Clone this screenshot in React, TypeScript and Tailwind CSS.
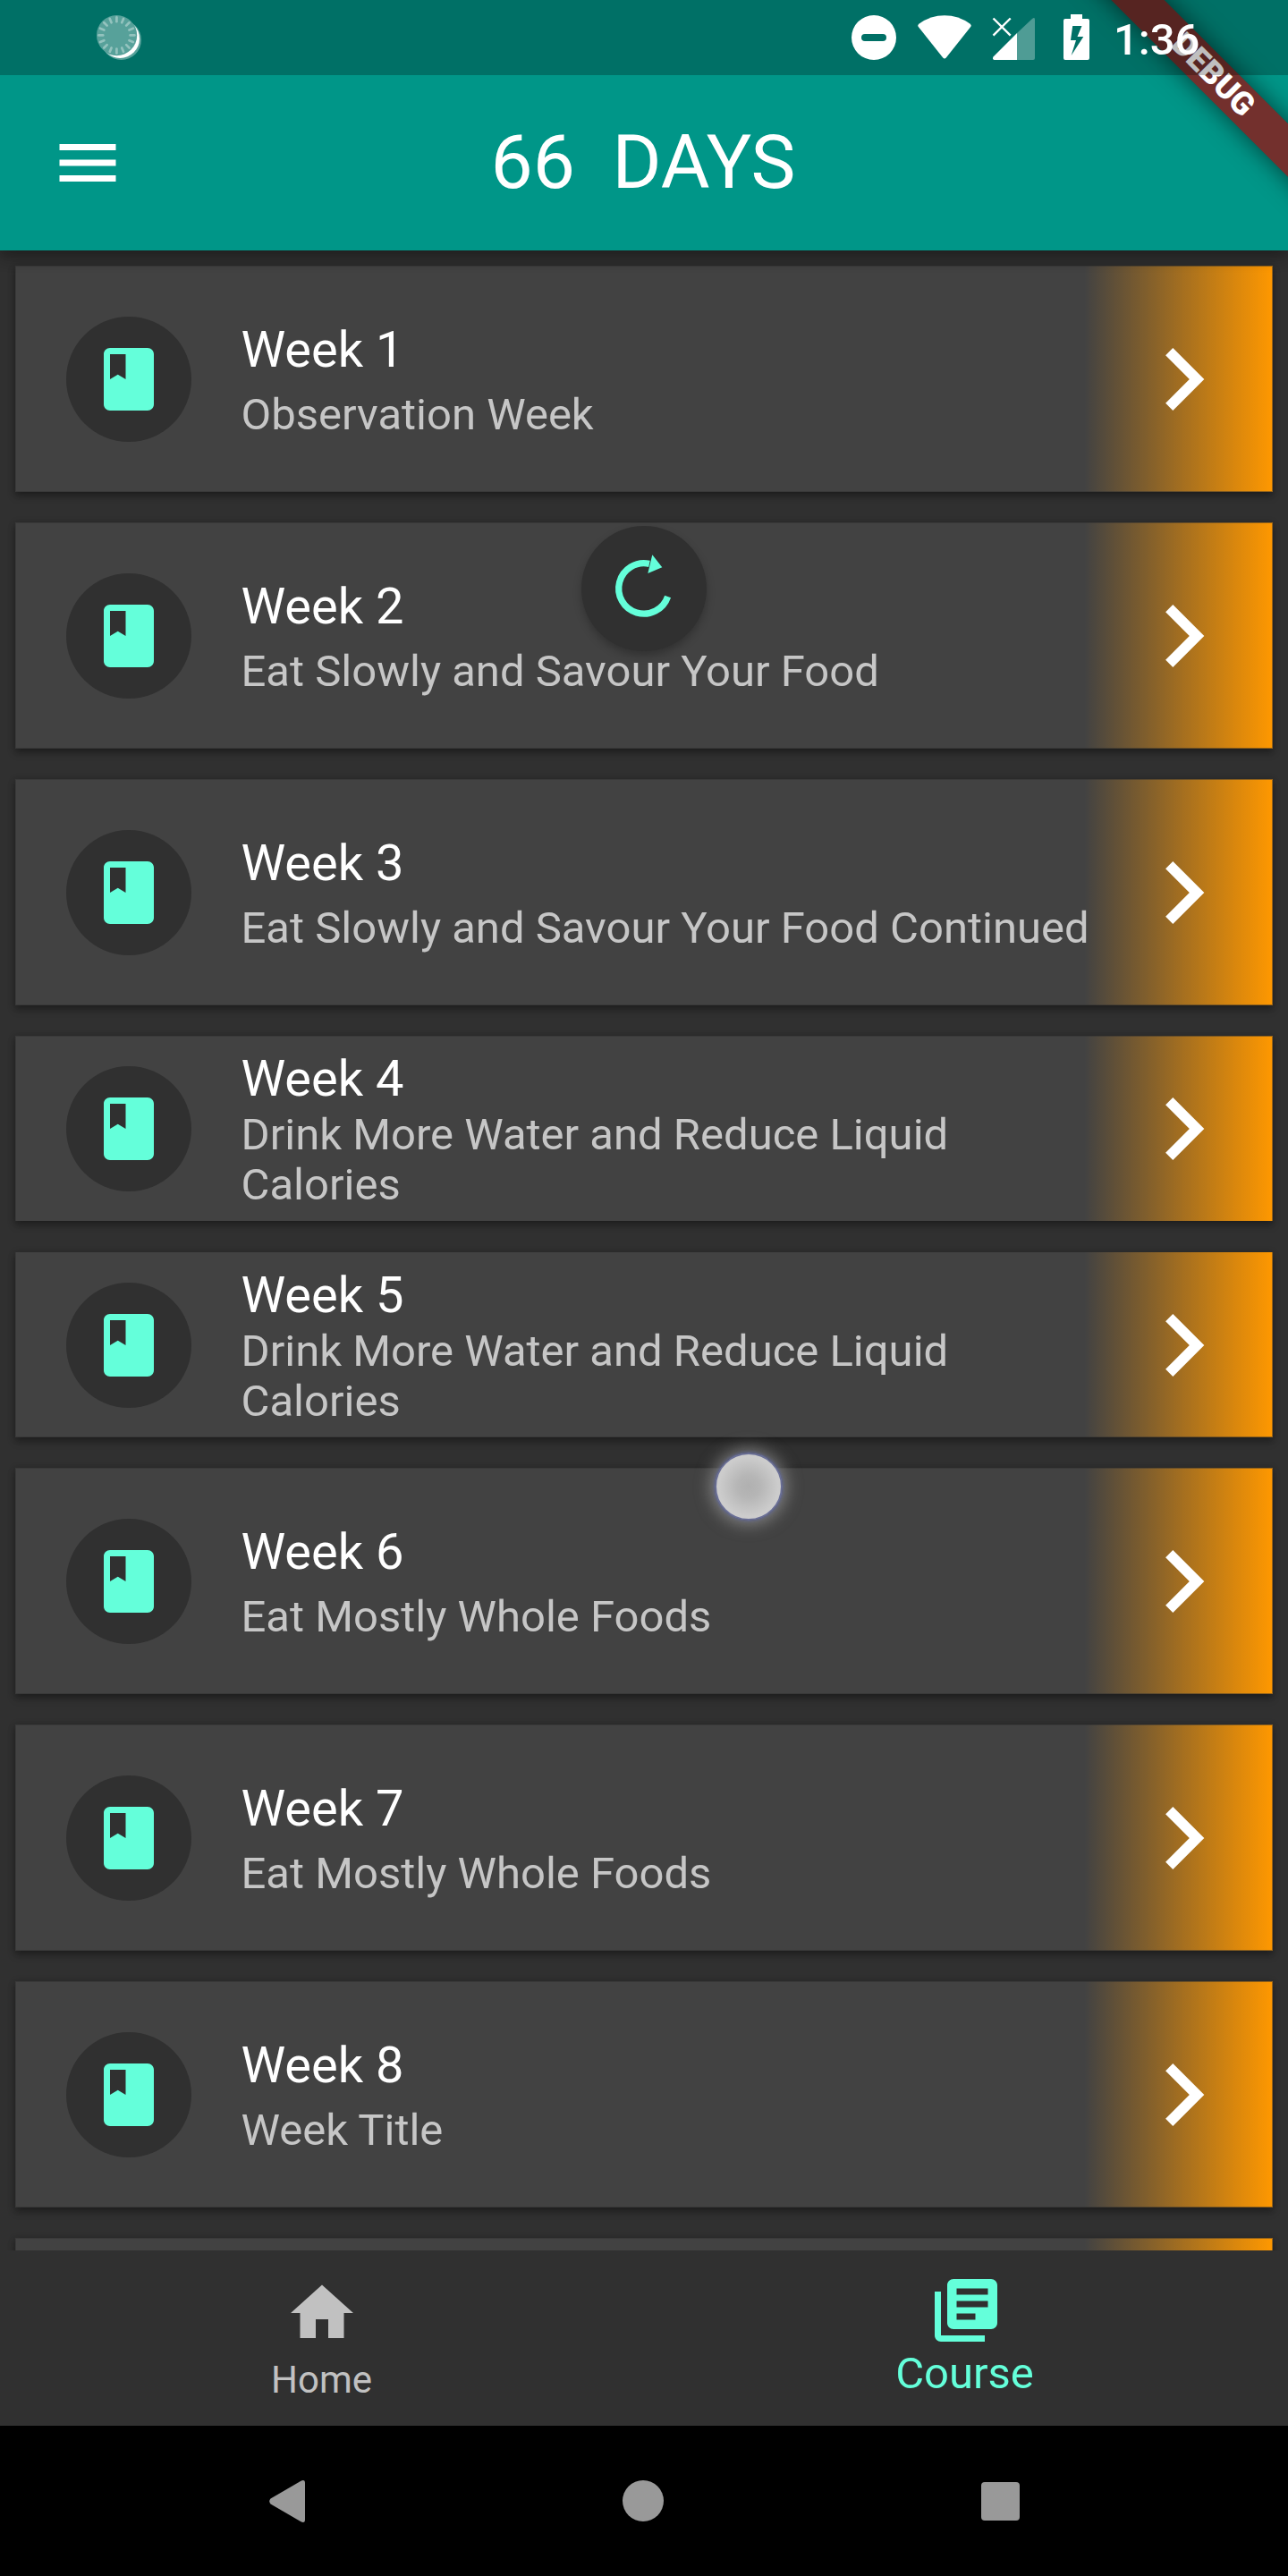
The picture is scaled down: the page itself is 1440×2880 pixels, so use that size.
import type { ReactNode } from "react";

type Week = {
  title: string;
  subtitle: string;
  box: string;
  text: string;
  edge: string;
};

const TALL = "h-[253px] mb-[34px]";
const TALL_TEXT = "pt-[61px] gap-[12px]";
const SHORT_TEXT = "pt-[15px] gap-[2px]";
const FULL_EDGE = "border";

const weeks: Week[] = [
  { title: "Week 1", subtitle: "Observation Week", box: TALL, text: TALL_TEXT, edge: FULL_EDGE },
  { title: "Week 2", subtitle: "Eat Slowly and Savour Your Food", box: TALL, text: TALL_TEXT, edge: FULL_EDGE },
  { title: "Week 3", subtitle: "Eat Slowly and Savour Your Food Continued", box: TALL, text: TALL_TEXT, edge: FULL_EDGE },
  { title: "Week 4", subtitle: "Drink More Water and Reduce Liquid Calories", box: "h-[207px] mb-[35px]", text: SHORT_TEXT, edge: "border-x border-t" },
  { title: "Week 5", subtitle: "Drink More Water and Reduce Liquid Calories", box: "h-[207px] mb-[34px]", text: SHORT_TEXT, edge: "border-x border-b" },
  { title: "Week 6", subtitle: "Eat Mostly Whole Foods", box: TALL, text: TALL_TEXT, edge: FULL_EDGE },
  { title: "Week 7", subtitle: "Eat Mostly Whole Foods", box: TALL, text: TALL_TEXT, edge: FULL_EDGE },
  { title: "Week 8", subtitle: "Week Title", box: TALL, text: TALL_TEXT, edge: FULL_EDGE },
];

function Card({ box, edge, children }: { box: string; edge: string; children?: ReactNode }) {
  return (
    <div
      className={`relative flex shrink-0 items-center bg-[#424242] pl-[56.5px] pr-[30px] shadow-[0_5px_8px_rgba(0,0,0,0.28),0_1px_8px_rgba(0,0,0,0.2)] ${box}`}
    >
      <div className="absolute inset-y-0 right-0 w-[211px] bg-linear-to-r from-transparent to-[#ff9800]" />
      <div className={`absolute inset-0 border-[#303030]/50 ${edge}`} />
      {children}
    </div>
  );
}

function WeekCard({ week }: { week: Week }) {
  return (
    <Card box={week.box} edge={week.edge}>
      <div className="flex size-[140px] shrink-0 items-center justify-center rounded-full bg-[#303030]">
        <svg viewBox="0 0 24 24" className="size-[84px] fill-[#64ffda]">
          <path d="M18 2H6c-1.1 0-2 .9-2 2v16c0 1.1.9 2 2 2h12c1.1 0 2-.9 2-2V4c0-1.1-.9-2-2-2zM6 4h5v8l-2.5-1.5L6 12V4z" />
        </svg>
      </div>
      <div className={`ml-[56px] flex w-[960px] flex-col self-start ${week.text}`}>
        <div className="text-[56px] leading-[66px] text-white">{week.title}</div>
        <div className="text-[49px] leading-[56px] text-[#c6c6c6]">{week.subtitle}</div>
      </div>
      <svg viewBox="0 0 24 24" className="relative ml-auto size-[140px] shrink-0 fill-white">
        <path d="M8.59 16.59L13.17 12 8.59 7.41 10 6l6 6-6 6-1.41-1.41z" />
      </svg>
    </Card>
  );
}

const TICKS = Array.from({ length: 16 }, (_, i) => i * 22.5);

function SyncIcon() {
  return (
    <svg viewBox="0 0 50 50" className="size-[50px]">
      <g opacity=".34" fill="#fff">
        <circle cx="22.4" cy="22.4" r="22.4" />
        <circle cx="27.6" cy="27.6" r="22.4" />
      </g>
      <mask id="crescent">
        <rect width="50" height="50" fill="#fff" />
        <circle cx="22.4" cy="22.4" r="22.8" fill="#000" />
      </mask>
      <circle cx="26.2" cy="26.2" r="21.8" fill="#fff" mask="url(#crescent)" />
      <g stroke="#fff" strokeOpacity=".36" strokeWidth="2.7" strokeLinecap="round">
        {TICKS.map((a) => (
          <line key={a} x1="37.6" y1="22.4" x2="42.4" y2="22.4" transform={`rotate(${a} 22.4 22.4)`} />
        ))}
      </g>
    </svg>
  );
}

function StatusBar() {
  return (
    <div className="absolute inset-x-0 top-0 flex h-[84px] items-center bg-black/25 pl-[108px] pr-[98px]">
      <SyncIcon />
      <svg viewBox="0 0 270 50" className="ml-auto h-[50px] w-[270px] overflow-visible" fill="#fff">
        <path fillRule="evenodd" d="M25 0a25 25 0 1 0 0 50a25 25 0 1 0 0-50zM15 21H35a4 4 0 0 1 0 8H15a4 4 0 0 1 0-8z" />
        <path d="M74.6 12.8Q73.5 11 75.3 9.7Q88.5 0.3 104 0.3Q119.5 0.3 132.7 9.7Q134.5 11 133.4 12.8L105.8 47.5Q104 49.5 102.2 47.5z" />
        <path d="M185 20V50H203Q205 50 205 48V5Q205 1.5 202 4z" fillOpacity=".31" />
        <path d="M185 20V50H159.5Q157 49 158.5 46.5z" />
        <path d="M158.5 3.5L177.7 22.7M177.7 3.5L158.5 22.7" stroke="#fff" strokeWidth="2.4" />
        <path fillRule="evenodd" d="M245-1h13v5h6q2 0 2 2v42q0 2-2 2h-25q-2 0-2-2V6q0-2 2-2h6zM247.2 12L245 28H251L245.7 45L259.3 24H252.5L257.5 12z" />
      </svg>
      <div className="ml-[23px] mt-[4px] w-[97px] whitespace-nowrap text-[49px] font-medium leading-[57px] text-white">1:36</div>
    </div>
  );
}

function DebugBanner() {
  return (
    <div className="absolute right-0 top-0 size-[280px] overflow-hidden">
      <div className="absolute left-[-84px] top-[63px] flex h-[42px] w-[560px] rotate-45 items-center justify-center bg-[rgba(144,22,22,0.8)] shadow-[0_0_26px_2px_rgba(0,0,0,0.5)]">
        <span className="text-[35.7px] font-black leading-none text-white">DEBUG</span>
      </div>
    </div>
  );
}

export default function App() {
  return (
    <div className="relative flex h-[2880px] w-[1440px] flex-col overflow-hidden bg-[#303030] font-['Roboto',sans-serif]">
      <header className="relative z-10 h-[280px] shrink-0 bg-[#009688] pt-[84px] shadow-[0_7px_16px_rgba(0,0,0,0.28),0_2px_20px_rgba(0,0,0,0.16)]">
        <div className="relative flex h-[196px] items-center justify-center">
          <svg viewBox="0 0 24 24" className="absolute left-[56px] size-[84px] fill-white">
            <path d="M3 18h18v-2H3v2zm0-5h18v-2H3v2zm0-7v2h18V6H3z" />
          </svg>
          <h1 className="mr-[2px] whitespace-pre text-[84px] leading-[98px] text-white">66  DAYS</h1>
        </div>
        <DebugBanner />
        <StatusBar />
      </header>

      <main className="flex h-[2236px] shrink-0 flex-col overflow-hidden px-[17px] pt-[17px]">
        {weeks.map((w) => (
          <WeekCard key={w.title} week={w} />
        ))}
        <Card box="h-[253px]" edge={FULL_EDGE} />
      </main>

      <nav className="relative grid h-[196px] shrink-0 grid-cols-2 bg-[#303030]">
        <div className="flex flex-col items-center pt-[28px] text-[#c1c1c1]">
          <svg viewBox="0 0 24 24" className="size-[84px] fill-current">
            <path d="M10 20v-6h4v6h5v-8h3L12 3 2 12h3v8z" />
          </svg>
          <span className="mr-[1px] mt-[8px] text-[42px] leading-[49px]">Home</span>
        </div>
        <div className="flex flex-col items-center pt-[25px] text-[#64ffda]">
          <svg viewBox="0 0 24 24" className="size-[84px] fill-current">
            <path d="M4 6H2v14c0 1.1.9 2 2 2h14v-2H4V6zm16-4H8c-1.1 0-2 .9-2 2v12c0 1.1.9 2 2 2h12c1.1 0 2-.9 2-2V4c0-1.1-.9-2-2-2zm-1 9H9V9h10v2zm-4 4H9v-2h6v2zm4-8H9V5h10v2z" />
          </svg>
          <span className="mr-[3px] text-[49px] leading-[57px]">Course</span>
        </div>
      </nav>

      <footer className="flex h-[168px] shrink-0 items-center justify-between bg-black pl-[301px] pr-[300.5px]">
        <svg viewBox="0 0 40 47" className="h-[47px] w-[40px] fill-[#999]">
          <path d="M1.5 20.5L35 1Q40-1.5 40 3V44Q40 48.5 35 46L1.5 26.5Q-1 23.5 1.5 20.5z" />
        </svg>
        <div className="size-[46.5px] rounded-full bg-[#999]" />
        <div className="size-[43px] rounded-[4px] bg-[#999]" />
      </footer>

      {/* pull-to-refresh indicator */}
      <div className="absolute left-[650px] top-[588px] size-[140px] rounded-full bg-[#303030] shadow-[0_5px_10px_rgba(0,0,0,0.25)]">
        <svg viewBox="0 0 140 140" className="size-[140px]">
          <path d="M96.6 79A28.2 28.2 0 1 1 76 42.4" fill="none" stroke="#64ffda" strokeWidth="7.3" />
          <path d="M79.3 32.3L90.3 46.3L74.3 53z" fill="#64ffda" />
        </svg>
      </div>

      {/* touch pointer */}
      <div className="absolute left-[798.5px] top-[1624px] size-[76px] rounded-full border-2 border-[#6a6f96] bg-[radial-gradient(circle,#b0b0b0_0%,#b6b6b6_25%,#cccccc_65%)] shadow-[0_0_3px_1px_rgba(90,98,150,0.7),0_0_18px_4px_rgba(200,200,200,0.5)]" />
    </div>
  );
}
